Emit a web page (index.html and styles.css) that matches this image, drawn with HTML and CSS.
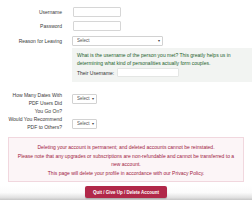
FILE: index.html
```html
<!DOCTYPE html>
<html>
<head>
<meta charset="utf-8">
<link rel="stylesheet" href="styles.css">
</head>
<body>
<div class="page">
  <form class="form">
    <div class="row r1">
      <label class="lbl">Username</label>
      <input class="field f-user" type="text">
    </div>
    <div class="row r2">
      <label class="lbl">Password</label>
      <input class="field f-user" type="password">
    </div>
    <div class="row r3">
      <label class="lbl">Reason for Leaving</label>
      <span class="sel sel-wide"><select><option>Select</option></select></span>
    </div>
    <div class="row r4">
      <span></span>
      <div class="hint">
        <p class="hint-text">What is the username of the person you met? This greatly helps us in determining what kind of personalities actually form couples.</p>
        <div class="hint-row">
          <label class="hint-lbl">Their Username:</label>
          <input class="field f-their" type="text">
        </div>
      </div>
    </div>
    <div class="row r5">
      <label class="lbl ml">How Many Dates With<br>PDF Users Did<br>You Go On?</label>
      <span class="sel sel-small s5"><select><option>Select</option></select></span>
    </div>
    <div class="row r6">
      <label class="lbl ml">Would You Recommend<br>PDF to Others?</label>
      <span class="sel sel-small s6"><select><option>Select</option></select></span>
    </div>
  </form>
  <div class="warn">
    <p>Deleting your account is permanent; and deleted accounts cannot be reinstated.</p>
    <p>Please note that any upgrades or subscriptions are non-refundable and cannot be transferred to a new account.</p>
    <p>This page will delete your profile in accordance with our Privacy Policy.</p>
  </div>
  <div class="footer">
    <button class="btn" type="button">Quit / Give Up / Delete Account</button>
  </div>
</div>
</body>
</html>
```

FILE: styles.css
```css
* { box-sizing: border-box; }
html, body { margin: 0; padding: 0; background: #fff; }
body {
  font-family: "Liberation Sans", Arial, sans-serif;
  font-size: 5px;
  color: #333;
  width: 252px;
  height: 200px;
  overflow: hidden;
}
.page { display: flex; flex-direction: column; }
.form { display: flex; flex-direction: column; padding-top: 7px; }
.row {
  display: grid;
  grid-template-columns: 62px 1fr;
  column-gap: 10px;
  align-items: center;
}
.r2 { margin-top: 4px; }
.r3 { margin-top: 5px; }
.r4 { margin-top: 2px; }
.r5 { margin-top: 9px; align-items: start; }
.r6 { align-items: start; }
.lbl {
  text-align: right;
  line-height: 8px;
  color: #3a3a3a;
  white-space: nowrap;
}
.field {
  display: block;
  height: 10px;
  border: 1px solid #d6d6d6;
  border-radius: 1px;
  background: #fff;
  padding: 0;
  margin: 0;
  font-size: 5px;
}
.f-user { width: 48px; margin-left: 1px; }
.sel { position: relative; display: block; }
.sel select {
  appearance: none;
  -webkit-appearance: none;
  display: block;
  width: 100%;
  height: 10px;
  border: 1px solid #d2d2d2;
  border-radius: 1px;
  background: #fff;
  font-family: "Liberation Sans", Arial, sans-serif;
  font-size: 4.5px;
  color: #555;
  padding: 0 0 0 4px;
  margin: 0;
  line-height: 8px;
}
.sel::after {
  content: "\25BE";
  position: absolute;
  right: 3px;
  top: 2px;
  font-size: 4px;
  line-height: 6px;
  color: #444;
}
.sel-wide { width: 91px; height: 10px; }
.sel-small { width: 25px; }
.s5 { margin-top: 3px; }
.s6 { margin-top: 4px; }
.hint {
  background: #f2f4f2;
  padding: 3px 0 3px 5px;
  height: 34px;
}
.hint-text {
  margin: 0;
  color: #245f2c;
  line-height: 8px;
  width: 172px;
}
.hint-row {
  display: flex;
  align-items: center;
  margin-top: 1px;
  gap: 3px;
}
.hint-lbl { color: #333; line-height: 8px; }
.f-their { width: 62px; height: 9px; border-color: #e4e6e4; }
.warn {
  margin: 6px 8px 0 8px;
  background: #fcf5f7;
  border: 1px solid #f1d7de;
  padding: 5px 6px 4px;
  text-align: center;
  color: #a0213f;
  line-height: 8.5px;
  height: 45px;
}
.warn p { margin: 0; }
.footer {
  margin-top: 4px;
  height: 19px;
  display: flex;
  justify-content: center;
  align-items: flex-start;
  background: linear-gradient(to bottom, #ffffff 0, #fbfbfb 35%, #e2e2e2 60%, #b9b9b9 80%, #d4d4d4 92%, #ececec 100%);
}
.btn {
  width: 82px;
  height: 12px;
  margin: 0;
  border: none;
  border-radius: 2px;
  background: #b12849;
  color: #fff;
  font-family: "Liberation Sans", Arial, sans-serif;
  font-weight: bold;
  font-size: 4.5px;
  padding: 0;
  box-shadow: 0 1px 1px rgba(0,0,0,0.2);
}
```
